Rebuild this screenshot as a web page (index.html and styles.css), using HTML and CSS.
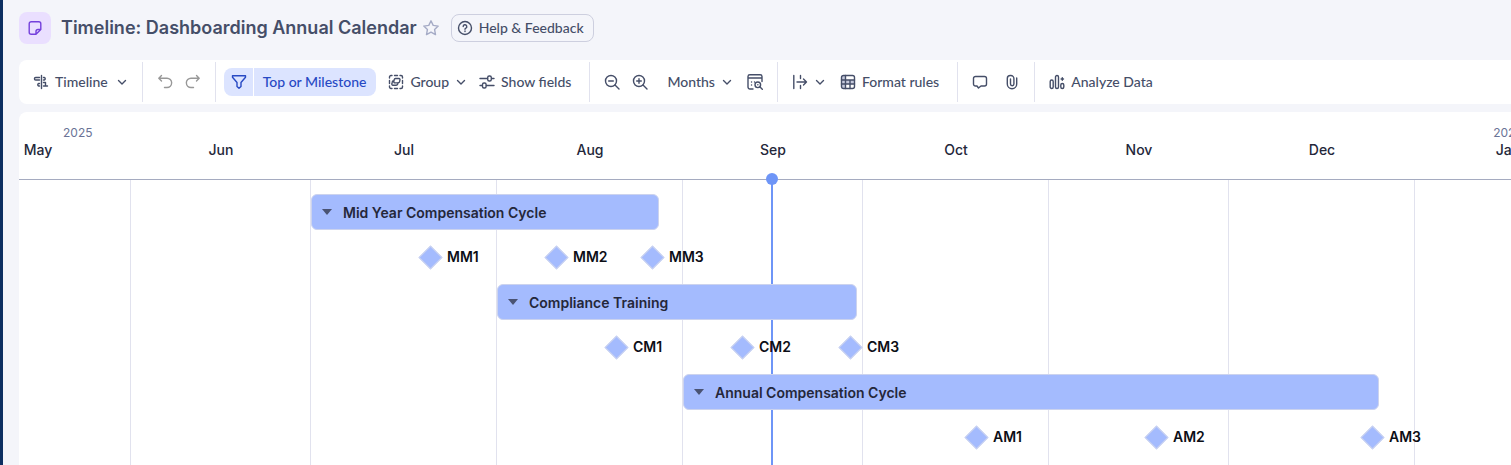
FILE: index.html
```html
<!DOCTYPE html>
<html lang="en">
  <head>
    <meta charset="UTF-8" />
    <meta name="viewport" content="width=device-width, initial-scale=1.0" />
    <title>Timeline: Dashboarding Annual Calendar</title>
    <link rel="stylesheet" href="styles.css">
  </head>
  <body>
    <div class="page">
      <header class="header">
        <span class="sheet-icon">
          <svg class="icon" viewBox="0 0 16 16"><path d="M8.500 14.300H4.200a2 2 0 0 1-2-2V3.700a2 2 0 0 1 2-2h7.600a2 2 0 0 1 2 2V9.500L9 14.300V11.500a2 2 0 0 1 2-2h2.800" /></svg>
        </span>
        <h1>Timeline: Dashboarding Annual Calendar</h1>
        <button class="star" type="button" aria-label="Favorite">
          <svg class="icon" viewBox="0 0 16 16"><path d="M8 .8l2.200 4.600 5 .7-3.600 3.500.9 5L8 12.200l-4.500 2.400.9-5L.8 6.100l5-.7z" /></svg>
        </button>
        <button class="help" type="button">
          <svg class="icon" viewBox="0 0 16 16"><circle cx="8" cy="8" r="6.500" /><path d="M6.200 6.600a1.800 1.800 0 1 1 2.700 1.500c-.6.3-.9.6-.9 1.200M8 10.900v.6" /></svg>
          <span>Help &amp; Feedback</span>
        </button>
      </header>

      <nav class="toolbar">
        <div class="group">
          <button class="tool menu" type="button">
            <svg class="icon" viewBox="0 0 16 16"><path d="M8.500 1.500v13M6.500 3.500H2.700a1.200 1.200 0 0 0 0 2.500h3.800M10.500 3.500h.8a1.300 1.300 0 0 1 0 2.500h-.8M6.500 9.500H5.700a1.300 1.300 0 0 0 0 2.500h.8M10.500 8.500h2M10.500 12h4M12.500 8.500V12" /></svg>
            <span>Timeline</span>
            <svg class="chevron" viewBox="0 0 12 12"><path d="M2.500 4.500L6 8l3.500-3.500" /></svg>
          </button>
        </div>
        <div class="group history">
          <button class="tool" type="button" aria-label="Undo">
            <svg class="icon" viewBox="0 0 16 16"><path d="M4.500 1.500L1.800 4.200l2.700 2.700M2 4.200h8a4.600 4.600 0 0 1 0 9.300H7.500" /></svg>
          </button>
          <button class="tool" type="button" aria-label="Redo">
            <svg class="icon" viewBox="0 0 16 16"><path d="M11.500 1.500l2.700 2.700-2.700 2.700M14 4.200H6a4.600 4.600 0 0 0 0 9.300h2.500" /></svg>
          </button>
        </div>
        <div class="group view">
          <div class="filter">
            <button class="filter-toggle" type="button" aria-label="Filter">
              <svg class="icon" viewBox="0 0 16 16"><path d="M1.500 1.700h13v1.500L10 8.500v4L8 14.300l-2-1.800v-4L1.500 3.200z" /></svg>
            </button>
            <button class="filter-name" type="button">Top or Milestone</button>
          </div>
          <button class="tool" type="button">
            <svg class="icon" viewBox="0 0 16 16"><path d="M1.500 4V3a1.500 1.500 0 0 1 1.500-1.500h1M12 1.500h1A1.500 1.500 0 0 1 14.500 3v1M14.500 12v1a1.500 1.500 0 0 1-1.500 1.500h-1M4 14.500H3A1.500 1.500 0 0 1 1.500 13v-1M6.500 1.500h3M6.500 14.500h3M1.500 6.500v3M14.500 6.500v3" /><path d="M7.500 4.500h3.500a1 1 0 0 1 1 1.200l-.4 2a1.500 1.500 0 0 1-1.500 1.200H6.800a1 1 0 0 1-1-1.200l.4-2a1.500 1.500 0 0 1 1.300-1.200zM5.800 6.800c-1 0-1.500.6-1.600 1.400l-.3 1.800a1 1 0 0 0 1 1.300h3.300c.8 0 1.300-.6 1.500-1.300l.3-1.200" /></svg>
            <span>Group</span>
            <svg class="chevron" viewBox="0 0 12 12"><path d="M2.500 4.500L6 8l3.500-3.500" /></svg>
          </button>
          <button class="tool" type="button">
            <svg class="icon" viewBox="0 0 16 16"><path d="M1 4.500h7.500M13 4.500h2M1 11.500h2M7.500 11.500H15" /><rect x="8.700" y="2" width="3.600" height="5" rx="1.500" /><rect x="3.500" y="9" width="3.600" height="5" rx="1.500" /></svg>
            <span>Show fields</span>
          </button>
        </div>
        <div class="group zoom">
          <button class="tool" type="button" aria-label="Zoom out">
            <svg class="icon" viewBox="0 0 16 16"><circle cx="7" cy="7" r="5.500" /><path d="M11 11l4 4M4.700 7h4.600" /></svg>
          </button>
          <button class="tool" type="button" aria-label="Zoom in">
            <svg class="icon" viewBox="0 0 16 16"><circle cx="7" cy="7" r="5.500" /><path d="M11 11l4 4M4.700 7h4.600M7 4.700v4.600" /></svg>
          </button>
          <button class="tool scale" type="button">
            <span>Months</span>
            <svg class="chevron" viewBox="0 0 12 12"><path d="M2.500 4.500L6 8l3.500-3.500" /></svg>
          </button>
          <button class="tool" type="button" aria-label="Go to date">
            <svg class="icon" viewBox="0 0 16 16"><path d="M6 15H3a2 2 0 0 1-2-2V2.500A1.800 1.800 0 0 1 2.800.8h10.400A1.800 1.800 0 0 1 15 2.500v5M1 4h14M4.500 8h.1M7.500 8h.1M4.500 11h.1" /><circle cx="10.800" cy="10.800" r="2.800" /><path d="M10.800 10.800h.1M13 13l2.300 2.300" /></svg>
          </button>
        </div>
        <div class="group format">
          <button class="tool" type="button" aria-label="Date range">
            <svg class="icon" viewBox="0 0 16 16"><path d="M1.800 1.500v13M5 8h9.500M11.500 5l3 3-3 3M8.500 1.500v3M8.500 11.500v3" /></svg>
            <svg class="chevron" viewBox="0 0 12 12"><path d="M2.500 4.500L6 8l3.500-3.500" /></svg>
          </button>
          <button class="tool" type="button">
            <svg class="icon" viewBox="0 0 16 16"><path class="shade" d="M1.500 1.500h4v13h-4zM5.500 6h9v4h-9z" /><rect x="1.500" y="1.500" width="13" height="13" rx="2" /><path d="M5.500 1.500v13M10 6v8.500M1.500 6h13M1.500 10h13" /></svg>
            <span>Format rules</span>
          </button>
        </div>
        <div class="group attach">
          <button class="tool" type="button" aria-label="Comments">
            <svg class="icon" viewBox="0 0 16 16"><path d="M3.500 2.500h9a2 2 0 0 1 2 2v5.500a2 2 0 0 1-2 2H9l-2.500 2L5 12H3.500a2 2 0 0 1-2-2V4.500a2 2 0 0 1 2-2z" /></svg>
          </button>
          <button class="tool" type="button" aria-label="Attachments">
            <svg class="icon" viewBox="0 0 16 16"><path d="M12.700 4v6a4.700 4.700 0 0 1-9.400 0V4.500a3 3 0 0 1 3-3h.6a3 3 0 0 1 3 3V10a1.700 1.700 0 0 1-3.400 0V5" /></svg>
          </button>
        </div>
        <div class="group">
          <button class="tool" type="button">
            <svg class="icon" viewBox="0 0 16 16"><rect x="1.200" y="6" width="3" height="8.500" rx="1.500" /><rect x="6.500" y="1.500" width="3" height="13" rx="1.500" /><rect x="11.800" y="9.500" width="3" height="5" rx="1.500" /><path d="M13.300 3.800v2.400M12.100 5h2.400" /></svg>
            <span>Analyze Data</span>
          </button>
        </div>
      </nav>

      <main class="timeline">
        <div class="scale-head">
          <div class="months years">
            <span class="year current">2025</span>
            <span class="year">2026</span>
          </div>
          <div class="months">
            <span>May</span>
            <span>Jun</span>
            <span>Jul</span>
            <span>Aug</span>
            <span>Sep</span>
            <span>Oct</span>
            <span>Nov</span>
            <span>Dec</span>
            <span>Jan</span>
          </div>
        </div>

        <!-- --start and --day are counted in days from June 1 -->
        <div class="chart">
          <div class="months gridlines">
            <i></i><i></i><i></i><i></i><i></i><i></i><i></i><i></i>
          </div>
          <div class="today" style="--day: 107"></div>

          <section class="lane">
            <button class="bar" type="button" style="--start: 30; --days: 58">
              <span class="caret"></span>Mid Year Compensation Cycle
            </button>
            <div class="milestones">
              <span class="milestone" style="--day: 50">MM1</span>
              <span class="milestone" style="--day: 71">MM2</span>
              <span class="milestone" style="--day: 87">MM3</span>
            </div>
          </section>
          <section class="lane">
            <button class="bar" type="button" style="--start: 61; --days: 60">
              <span class="caret"></span>Compliance Training
            </button>
            <div class="milestones">
              <span class="milestone" style="--day: 81">CM1</span>
              <span class="milestone" style="--day: 102">CM2</span>
              <span class="milestone" style="--day: 120">CM3</span>
            </div>
          </section>
          <section class="lane">
            <button class="bar" type="button" style="--start: 92; --days: 116">
              <span class="caret"></span>Annual Compensation Cycle
            </button>
            <div class="milestones">
              <span class="milestone" style="--day: 141">AM1</span>
              <span class="milestone" style="--day: 171">AM2</span>
              <span class="milestone" style="--day: 207">AM3</span>
            </div>
          </section>
        </div>
      </main>
    </div>
  </body>
</html>
```
FILE: styles.css
```css
* {
  box-sizing: border-box;
}
body {
  margin: 0;
  background-color: #f4f5fa;
  color: #454e68;
  font-family: Inter, sans-serif;
  font-size: 14px;
  overflow: hidden;
}
button {
  margin: 0;
  padding: 0;
  border: none;
  background: none;
  color: inherit;
  font: inherit;
  cursor: pointer;
}
.page {
  display: flex;
  flex-direction: column;
  min-height: 100vh;
  padding-left: 16px;
  border-left: 3px solid #0d2f61;
}
.icon {
  flex: none;
  width: 16px;
  height: 16px;
}
.chevron {
  flex: none;
  width: 12px;
  height: 12px;
}
.icon,
.chevron {
  display: block;
  fill: none;
  stroke: currentColor;
  stroke-width: 1.4;
  stroke-linecap: round;
  stroke-linejoin: round;
}

/* Header */
.header {
  display: flex;
  align-items: center;
  height: 56px;
}
.sheet-icon {
  display: flex;
  align-items: center;
  justify-content: center;
  width: 32px;
  height: 32px;
  border-radius: 8px;
  background-color: #eadfff;
  color: #7440dc;
}
.header h1 {
  margin: 0 6px 0 10px;
  font-size: 18px;
  font-weight: 600;
  line-height: 24px;
}
.star {
  color: #a5abc6;
}
.help {
  display: flex;
  align-items: center;
  gap: 6px;
  height: 28px;
  margin-left: 12px;
  padding: 0 9px 0 5px;
  border: 1px solid #cdcfdf;
  border-radius: 8px;
  font-family: Lato, sans-serif;
  font-weight: 500;
}

/* Toolbar */
.toolbar {
  display: flex;
  align-items: center;
  height: 44px;
  margin-top: 4px;
  border-radius: 8px 0 0 8px;
  background-color: #fff;
  font-family: Lato, sans-serif;
  font-weight: 500;
  white-space: nowrap;
}
.group {
  display: flex;
  align-items: center;
  gap: 12px;
  height: 40px;
  padding: 0 14px;
  border-right: 1px solid #e1e2ee;
}
.group:last-child {
  border-right: none;
}
.tool {
  display: flex;
  align-items: center;
  gap: 6px;
  height: 28px;
}
.tool span,
.help span,
.filter-name {
  padding-bottom: 2px;
}
.menu .chevron {
  margin-left: 2px;
}
.history {
  color: #989898;
}
.view {
  padding: 0 18px 0 8px;
}
.filter {
  display: flex;
  gap: 1px;
  color: #2749c4;
}
.filter-toggle,
.filter-name {
  height: 28px;
  background-color: #dce4ff;
}
.filter-toggle {
  padding: 0 6px 0 7px;
  border-radius: 8px 0 0 8px;
}
.filter-name {
  padding-left: 9px;
  padding-right: 10px;
  border-radius: 0 8px 8px 0;
}
.scale {
  margin: 0 2px 0 7px;
}
.format {
  gap: 14px;
  padding-right: 18px;
}
.attach {
  gap: 16px;
}
.shade {
  fill: #c5c9dc;
  stroke: none;
}

/* Timeline */
.timeline {
  display: flex;
  flex: 1;
  flex-direction: column;
  margin-top: 8px;
  border-radius: 8px 0 0 0;
  background-color: #fff;
  overflow: hidden;
}
.scale-head {
  height: 68px;
  padding-top: 13px;
  border-bottom: 1px solid #a5abc0;
  color: #24273a;
}
/* one day is 6px wide, the first column starts on May 1 */
.months {
  display: grid;
  grid-template-columns: 186px 180px 186px 186px 180px 186px 180px 186px 186px;
  margin-left: -74px;
  font-weight: 500;
  line-height: 18px;
  text-align: center;
}
.years {
  color: #6a7396;
  font-size: 12px;
  font-weight: 400;
  line-height: 16px;
}
.current {
  grid-column: span 8;
  padding-left: 118px;
  text-align: left;
}
.chart {
  position: relative;
  flex: 1;
  padding: 14px 0 0 112px;
}
.gridlines {
  position: absolute;
  inset: 0;
}
.gridlines i {
  border-right: 1px solid #e1e2ee;
}
.today {
  position: absolute;
  top: 0;
  bottom: 0;
  left: calc(110px + var(--day) * 6px);
  width: 2px;
  background-color: #6e95f7;
}
.today::before {
  content: "";
  position: absolute;
  top: -7px;
  left: -5px;
  width: 12px;
  height: 12px;
  border-radius: 50%;
  background-color: #6e95f7;
}
.lane {
  position: relative;
  height: 90px;
}
.bar {
  display: flex;
  align-items: center;
  gap: 11px;
  width: calc(var(--days) * 6px);
  height: 36px;
  margin-left: calc(var(--start) * 6px);
  padding: 0 10px;
  border: 1px solid #ccd3ee;
  border-radius: 6px;
  background-color: #a4bbfe;
  color: #24273a;
  font-weight: 600;
}
.caret {
  border: 5px solid transparent;
  border-top: 6px solid #4a5373;
  border-bottom: none;
}
.milestones {
  position: relative;
  height: 54px;
}
.milestone {
  position: absolute;
  top: 18px;
  left: calc(var(--day) * 6px - 9px);
  display: flex;
  align-items: center;
  gap: 8px;
  color: #0c0e16;
  font-weight: 600;
  line-height: 18px;
}
.milestone::before {
  content: "";
  width: 15px;
  height: 15px;
  border: 1px solid #ccd3ee;
  background-color: #a4bbfe;
  transform: rotate(45deg);
}
```
